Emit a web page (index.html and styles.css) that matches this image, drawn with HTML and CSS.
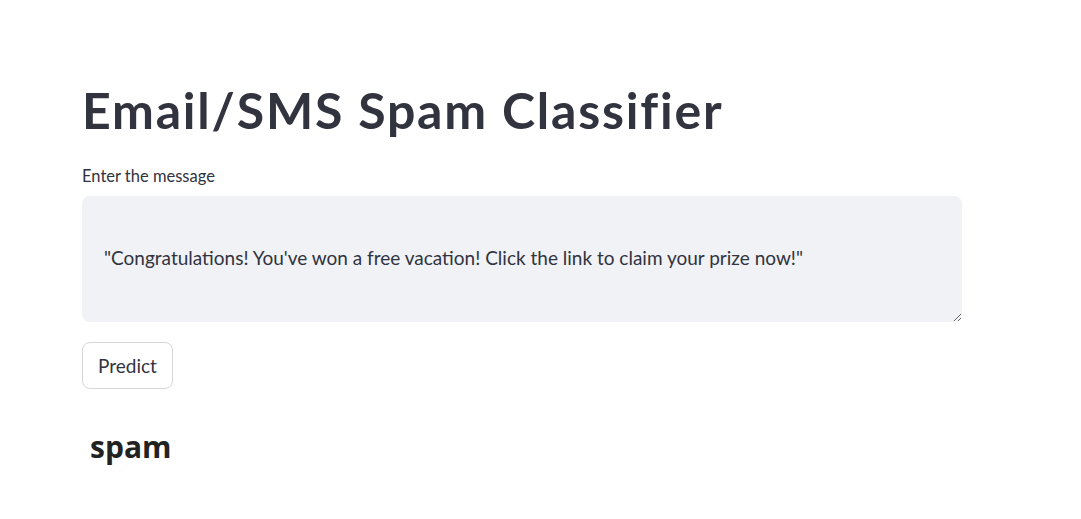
FILE: index.html
```html
<!DOCTYPE html>
<html>
<head>
<meta charset="utf-8">
<link rel="stylesheet" href="styles.css">
</head>
<body>
<main class="main">
  <h1 class="title">Email/SMS Spam Classifier</h1>
  <label class="label" for="msg">Enter the message</label>
  <textarea id="msg" class="input">

"Congratulations! You've won a free vacation! Click the link to claim your prize now!"</textarea>
  <button class="btn">Predict</button>
  <h2 class="result">spam</h2>
</main>
</body>
</html>
```

FILE: styles.css
```css
html, body {
  margin: 0;
  padding: 0;
  background: #ffffff;
}
body {
  font-family: Lato, "Noto Sans", sans-serif;
  color: #31333f;
}
.main {
  width: 880px;
  padding: 76px 0 0 82px;
  display: flex;
  flex-direction: column;
  align-items: flex-start;
}
.title {
  margin: 0;
  font-size: 50px;
  font-weight: 700;
  letter-spacing: 1.8px;
  line-height: 68px;
  color: #31333f;
}
.label {
  margin-top: 22px;
  font-size: 16.5px;
  line-height: 20px;
  color: #31333f;
}
.input {
  box-sizing: border-box;
  margin-top: 10px;
  width: 880px;
  height: 126px;
  border: none;
  border-radius: 8px;
  background: #f0f2f6;
  padding: 23px 20px 16px 22px;
  font-family: inherit;
  font-size: 19px;
  line-height: 26px;
  color: #31333f;
  outline: none;
}
.btn {
  margin-top: 20px;
  box-sizing: border-box;
  width: 91px;
  height: 47px;
  border: 1px solid #d6d6d9;
  border-radius: 8px;
  background: #fff;
  font-family: inherit;
  font-size: 19px;
  color: #31333f;
  padding: 0;
}
.result {
  margin: 38px 0 0 8px;
  font-family: "Open Sans", sans-serif;
  font-size: 30px;
  font-weight: 700;
  line-height: 40px;
  color: #222222;
}
```
